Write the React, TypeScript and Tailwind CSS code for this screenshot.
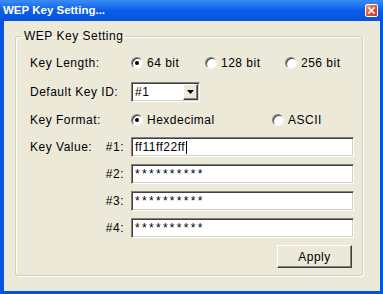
import React from "react";

const font = "font-['Liberation_Sans',Arial,sans-serif]";

function Radio({ checked }: { checked?: boolean }) {
  return (
    <span className="relative inline-flex h-[12px] w-[12px] shrink-0 items-center justify-center rounded-full border border-t-[#808080] border-l-[#808080] border-b-[#f4f4f0] border-r-[#f4f4f0] bg-white shadow-[inset_1px_1px_0_#404040]">
      {checked && <span className="h-[4px] w-[4px] rounded-full bg-black" />}
    </span>
  );
}

function Sunken({ className, children }: { className?: string; children?: React.ReactNode }) {
  return (
    <div
      className={
        "flex items-center border border-t-[#808080] border-l-[#808080] border-b-[#ffffff] border-r-[#ffffff] bg-white shadow-[inset_1px_1px_0_#404040,inset_-1px_-1px_0_#d4d0c8] " +
        (className ?? "")
      }
    >
      {children}
    </div>
  );
}

function KeyRow({ label, id, value, caret }: { label?: string; id: string; value: string; caret?: boolean }) {
  return (
    <div className="flex h-[20px] items-center">
      <div className="w-[70px]">{label}</div>
      <div className="w-[24px] text-right">{id}</div>
      <div className="w-[7px]" />
      <Sunken className="h-[20px] w-[223px] pl-[3px]">
        <span className={value.startsWith("*") ? "tracking-[2.3px]" : ""}>{value}</span>
        {caret && <span className="ml-[1px] h-[13px] w-[1px] bg-black" />}
      </Sunken>
    </div>
  );
}

export default function App() {
  return (
    <div className={`h-[294px] w-[383px] overflow-hidden bg-[#0055E5] ${font} text-[12px] tracking-[0.5px] text-black`}>
      {/* Title bar */}
      <div className="flex h-[21px] items-center justify-between bg-gradient-to-b from-[#3C8CF5] via-[#0A5CE9] to-[#0553E0] pl-[3px] pr-[5px]">
        <span className="text-[11.5px] font-bold tracking-[0px] text-white">WEP Key Setting...</span>
        <span className="flex h-[13px] w-[13px] items-center justify-center rounded-[2px] border border-white bg-gradient-to-br from-[#F2A089] via-[#DC5434] to-[#C2391A]">
          <svg width="7" height="7" viewBox="0 0 7 7">
            <path d="M1 1 L6 6 M6 1 L1 6" stroke="white" strokeWidth="1.6" strokeLinecap="square" />
          </svg>
        </span>
      </div>

      {/* Body */}
      <div className="mx-[3px] h-[270px] border-l border-[#1B4FC8] bg-[#ECE9D8] pl-[11px] pr-[17px] pt-[8px]">
        <fieldset className="h-[247px] rounded-[3px] border border-[#D0D0BF] pl-[14px] pr-[7px] shadow-[inset_1px_1px_0_#fff,1px_1px_0_#fff]">
          <legend className="ml-[-8px] px-[2px] leading-[14px]">WEP Key Setting</legend>

          <div className="flex flex-col pt-[10px]">
            <div className="flex h-[20px] items-center">
              <div className="w-[101px]">Key Length:</div>
              <Radio checked />
              <span className="ml-[4px] w-[58px]">64 bit</span>
              <Radio />
              <span className="ml-[4px] w-[64px]">128 bit</span>
              <Radio />
              <span className="ml-[4px]">256 bit</span>
            </div>

            <div className="mt-[9px] flex h-[20px] items-center">
              <div className="w-[101px]">Default Key ID:</div>
              <Sunken className="h-[20px] w-[69px] justify-between pl-[3px] pr-[1px]">
                <span>#1</span>
                <span className="flex h-[16px] w-[15px] items-center justify-center border border-t-white border-l-white border-b-[#404040] border-r-[#404040] bg-[#ECE9D8] shadow-[inset_-1px_-1px_0_#808080]">
                  <svg width="7" height="4" viewBox="0 0 7 4">
                    <path d="M0 0 H7 L3.5 4 Z" fill="black" />
                  </svg>
                </span>
              </Sunken>
            </div>

            <div className="mt-[8px] flex h-[20px] items-center">
              <div className="w-[101px]">Key Format:</div>
              <Radio checked />
              <span className="ml-[4px] w-[125px]">Hexdecimal</span>
              <Radio />
              <span className="ml-[4px]">ASCII</span>
            </div>

            <div className="mt-[7px] flex flex-col gap-[7px]">
              <KeyRow label="Key Value:" id="#1:" value="ff11ff22ff" caret />
              <KeyRow id="#2:" value="**********" />
              <KeyRow id="#3:" value="**********" />
              <KeyRow id="#4:" value="**********" />
            </div>

            <div className="mt-[7px] flex justify-end pr-[3px]">
              <button className="h-[23px] w-[75px] border border-t-white border-l-white border-b-[#404040] border-r-[#404040] bg-[#ECE9D8] shadow-[inset_-1px_-1px_0_#808080]">
                Apply
              </button>
            </div>
          </div>
        </fieldset>
      </div>
    </div>
  );
}
